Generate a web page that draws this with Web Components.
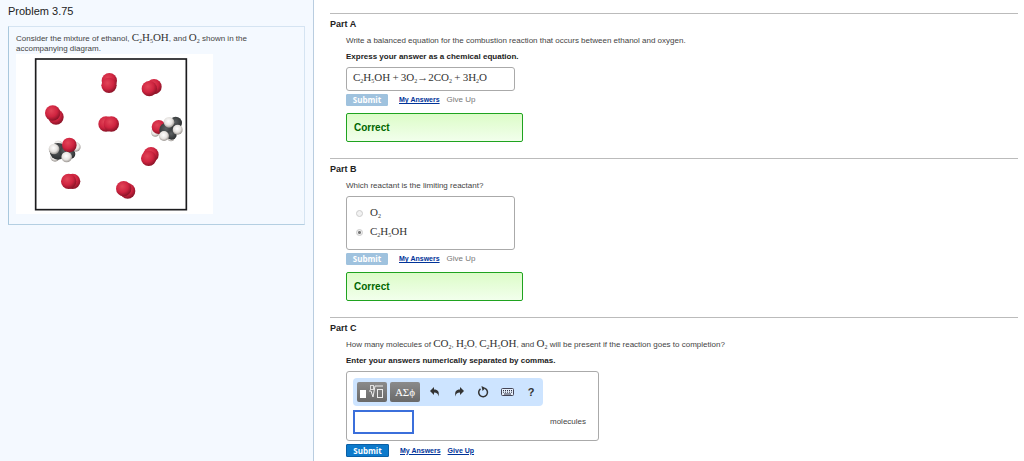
<!DOCTYPE html>
<html lang="en">
<head>
<meta charset="utf-8">
<title>Problem 3.75</title>
<style>
body { margin: 0; font: 8px/12px "Liberation Sans", Arial, sans-serif; color: #444; background: #fff; }
</style>
</head>
<body>
<problem-page>
  <problem-panel slot="aside" heading="Problem 3.75">
    Consider the mixture of ethanol, <chem-formula>C2H5OH</chem-formula>, and <chem-formula>O2</chem-formula> shown in the <span>accompanying diagram.</span>
    <mixture-diagram slot="figure"></mixture-diagram>
  </problem-panel>
  <problem-part heading="Part A">
    <span slot="question">Write a balanced equation for the combustion reaction that occurs between ethanol and oxygen.</span>
    <span slot="instruction">Express your answer as a chemical equation.</span>
    <answer-box><chem-formula>C2H5OH&thinsp;+&thinsp;3O2→2CO2&thinsp;+&thinsp;3H2O</chem-formula></answer-box>
    <submit-bar done></submit-bar>
    <result-banner>Correct</result-banner>
  </problem-part>
  <problem-part heading="Part B">
    <span slot="question">Which reactant is the limiting reactant?</span>
    <answer-box><reactant-choice></reactant-choice></answer-box>
    <submit-bar done></submit-bar>
    <result-banner>Correct</result-banner>
  </problem-part>
  <problem-part heading="Part C">
    <span slot="question">How many molecules of <chem-formula>CO2</chem-formula>, <chem-formula>H2O</chem-formula>, <chem-formula>C2H5OH</chem-formula>, and <chem-formula>O2</chem-formula> will be present if the reaction goes to completion?</span>
    <span slot="instruction">Enter your answers numerically separated by commas.</span>
    <answer-box wide><math-entry></math-entry></answer-box>
    <submit-bar></submit-bar>
  </problem-part>
</problem-page>
<script>
function define(name, html, init) {
  const template = document.createElement('template');
  template.innerHTML = html;
  customElements.define(name, class extends HTMLElement {
    constructor() {
      super();
      this.attachShadow({ mode: 'open' }).append(template.content.cloneNode(true));
    }
    connectedCallback() { if (init) init(this, this.shadowRoot); }
  });
}
function setHeading(host, root) {
  root.querySelector('.title').textContent = host.getAttribute('heading');
}

define('problem-page', `
<style>
:host { display: grid; grid-template-columns: minmax(240px, 314px) 1fr; min-height: 100vh; }
aside { background: #f4f9ff; border-right: 1px solid #b9cde0; padding: 5px 8px; }
main { padding: 13px 6px 4px 16px; }
</style>
<aside><slot name="aside"></slot></aside>
<main><slot></slot></main>`);

define('problem-panel', `
<style>
:host { display: block; }
h1 { margin: 0 0 8px; font-size: 11px; line-height: 13px; font-weight: 400; color: #222; }
.card { border: 1px solid #d5e4f2; border-left-color: #a9c8dd; border-bottom-color: #b4cfe2; padding: 7px 8px 10px 7px; }
p { margin: 0; line-height: 10px; max-width: 240px; }
</style>
<h1 class="title"></h1>
<div class="card"><p><slot></slot></p><slot name="figure"></slot></div>`, setHeading);

define('chem-formula', `
<style>
:host { display: inline; font-family: "Liberation Serif", "Times New Roman", serif; font-size: 11px; line-height: 1px; color: #333; white-space: nowrap; }
sub { font-size: 6px; line-height: 0; vertical-align: -2px; }
</style><span></span>`, (host, root) => {
  root.querySelector('span').innerHTML = host.textContent.replace(/([A-Z])(\d)/g, '$1<sub>$2</sub>');
});

define('problem-part', `
<style>
:host { display: block; border-top: 1px solid #bbb; padding: 4px 0 16px; }
h2 { margin: 0; font-size: 9px; line-height: 12px; font-weight: 700; color: #222; }
.body { padding-left: 16px; }
slot[name] { display: block; margin-top: 5px; }
slot[name=instruction] { font-weight: 700; color: #222; margin-top: 4px; }
</style>
<h2 class="title"></h2>
<div class="body">
<slot name="question"></slot>
<slot name="instruction"></slot>
<slot></slot>
</div>`, (host, root) => {
  setHeading(host, root);
  if (!host.querySelector('[slot=instruction]')) root.querySelector('slot[name=instruction]').remove();
});

define('answer-box', `
<style>
:host { display: block; box-sizing: border-box; max-width: 169px; margin-top: 4px; padding: 5px 6px; border: 1px solid #aaa; border-radius: 3px; }
:host([wide]) { max-width: 253px; }
</style><slot></slot>`);

define('submit-bar', `
<style>
:host { display: flex; align-items: center; gap: 7px; margin-top: 3px; }
button { box-sizing: border-box; width: 43px; height: 13px; margin: 0 4px 0 0; padding: 0; border: 1px solid #0b5fa5; background: #0d7acb; color: #fff; font: 700 8px/10px "Open Sans", "Liberation Sans", sans-serif; border-radius: 1px; }
:host([done]) button { width: 42px; height: 12px; background: #9fc2de; border-color: #9fc2de; color: #fff; }
a { color: #039; font-size: 7px; font-weight: 700; text-decoration: underline; }
.off { color: #777; }
</style>
<button type="button">Submit</button>
<a href="#answers">My Answers</a>
<a href="#give-up" class="on">Give Up</a>
<span class="off">Give Up</span>`, (host, root) => {
  const done = host.hasAttribute('done');
  root.querySelector('button').disabled = done;
  root.querySelector(done ? '.on' : '.off').remove();
});

define('result-banner', `
<style>
:host { display: block; box-sizing: border-box; max-width: 177px; margin-top: 7px; padding: 8px 8px 7px 7px; border: 1px solid #1fa31f; border-radius: 2px; background: linear-gradient(#dcfcc8, #f2ffec); color: #060; font-size: 10px; font-weight: 700; }
</style><slot></slot>`);

define('reactant-choice', `
<style>
:host { display: block; padding: 2px 3px; }
div { display: flex; align-items: center; gap: 7px; height: 19px; }
input { appearance: none; box-sizing: border-box; width: 7px; height: 7px; margin: 0; border: 1px solid #ccc; border-radius: 50%; background: #f2f2f2; }
input:checked { background: radial-gradient(circle, #777 0 1px, #eee 2px); }
</style>
<div><input type="radio" name="reactant" id="o2" disabled><label for="o2"><chem-formula>O2</chem-formula></label></div>
<div><input type="radio" name="reactant" id="ethanol" checked disabled><label for="ethanol"><chem-formula>C2H5OH</chem-formula></label></div>`);

define('math-entry', `
<style>
:host { display: block; padding: 1px 0; }
.bar { display: flex; align-items: center; box-sizing: border-box; max-width: 190px; height: 28px; padding: 0 4px; background: #cde4ff; border-radius: 4px; }
button { flex: none; display: grid; place-items: center; width: 24px; height: 20px; margin: 0; padding: 0; border: 0; background: none; color: #333; font: 700 11px/12px "Liberation Sans", sans-serif; }
.key { width: 30px; margin-right: 3px; border-radius: 2px; background: linear-gradient(#8b8b8b, #696969); color: #fff; font: 11px/12px "Liberation Serif", serif; }
.entry { display: flex; align-items: center; gap: 136px; margin-top: 4px; }
input { box-sizing: border-box; width: 61px; height: 24px; margin: 0; padding: 2px; border: 2px solid #3b6fdb; background: #fff; font: inherit; outline: none; }
</style>
<div class="bar">
<button class="key" type="button" aria-label="Templates"><svg width="24" height="16" viewBox="0 0 24 16"><rect x="0" y="6" width="6" height="8" fill="#fff"/><path d="M9 7h2l2 6 2-11h8" fill="none" stroke="#eee"/><rect x="10.5" y="1.500" width="3" height="4" fill="none" stroke="#ddd"/><rect x="17.500" y="5.500" width="5" height="8" fill="none" stroke="#eee"/></svg></button>
<button class="key" type="button" aria-label="Symbols">ΑΣϕ</button>
<button type="button" aria-label="Undo"><svg width="10" height="10" viewBox="0 0 10 10"><path d="M0 4 4 0v2.500c4 0 5.500 2 4.500 7C8 6.500 7 5.500 4 5.500V8z" fill="#333"/></svg></button>
<button type="button" aria-label="Redo"><svg width="10" height="10" viewBox="0 0 10 10"><path d="M10 4 6 0v2.500c-4 0-5.500 2-4.500 7C2 6.500 3 5.500 6 5.500V8z" fill="#333"/></svg></button>
<button type="button" aria-label="Reset"><svg width="12" height="12" viewBox="0 0 12 12"><path d="M8 2.400A4.400 4.400 0 1 1 3.500 2.800" fill="none" stroke="#333" stroke-width="1.500"/><path d="M4.500 0 8.500 2 5.500 5z" fill="#333"/></svg></button>
<button type="button" aria-label="Keyboard"><svg width="13" height="8" viewBox="0 0 13 8"><rect x=".5" y=".5" width="12" height="7" rx="1" fill="#e4eefa" stroke="#445"/><path d="M2 2.500h9M2 4.200h9" stroke="#334" stroke-dasharray="1 1"/><path d="M3 6h7" stroke="#334"/></svg></button>
<button type="button" aria-label="Help">?</button>
</div>
<div class="entry"><input id="count" type="text" aria-describedby="unit" autocomplete="off"><label id="unit" for="count">molecules</label></div>`);

const ball = (kind, x, y, r) => `<circle cx="${x}" cy="${y}" r="${r}" fill="url(#${kind})"/>`;
const oxygen = [[268,92,267,106],[402,110,388,116],[108,201,98,189],[258,222,274,222],[393,314,386,325],[158,394,146,394],[323,423,311,416]]
  .map(([a, b, c, d]) => ball('red', a, b, 23) + ball('red', c, d, 23)).join('');
const ethanol = [
  ['white',115,284,12],['white',105,321,14],['dark',114,304,25],['dark',151,312,15],['dark',134,305,16],['white',102,297,16],['white',168,291,14],['red',148,285,22],['white',140,321,16],
  ['white',406,247,13],['red',416,231,21],['white',453,264,10],['dark',467,219,19],['dark',440,240,22],['dark',455,254,15],['white',447,217,16],['white',473,239,15],['white',432,258,15]
].map(b => ball(...b)).join('');
define('mixture-diagram', `
<style>:host { display: block; } svg { display: block; max-width: 100%; }</style>
<svg width="197" height="160" viewBox="-12 12 591 480" role="img" aria-label="Seven oxygen molecules and two ethanol molecules in a box">
<defs>
<radialGradient id="red" cx=".4" cy=".35" r=".65"><stop offset="0" stop-color="#e24558"/><stop offset=".6" stop-color="#cf2440"/><stop offset="1" stop-color="#8c1428"/></radialGradient>
<radialGradient id="white" cx=".45" cy=".4" r=".6"><stop offset="0" stop-color="#fff"/><stop offset=".6" stop-color="#e6e3e0"/><stop offset="1" stop-color="#999490"/></radialGradient>
<radialGradient id="dark" cx=".45" cy=".4" r=".6"><stop offset="0" stop-color="#5c6062"/><stop offset="1" stop-color="#2b2e30"/></radialGradient>
</defs>
<rect x="-12" y="12" width="591" height="480" fill="#fff"/>
<rect x="47" y="27" width="452" height="452" fill="none" stroke="#1c1c1e" stroke-width="5"/>
${oxygen}${ethanol}
</svg>`);
</script>
</body>
</html>
